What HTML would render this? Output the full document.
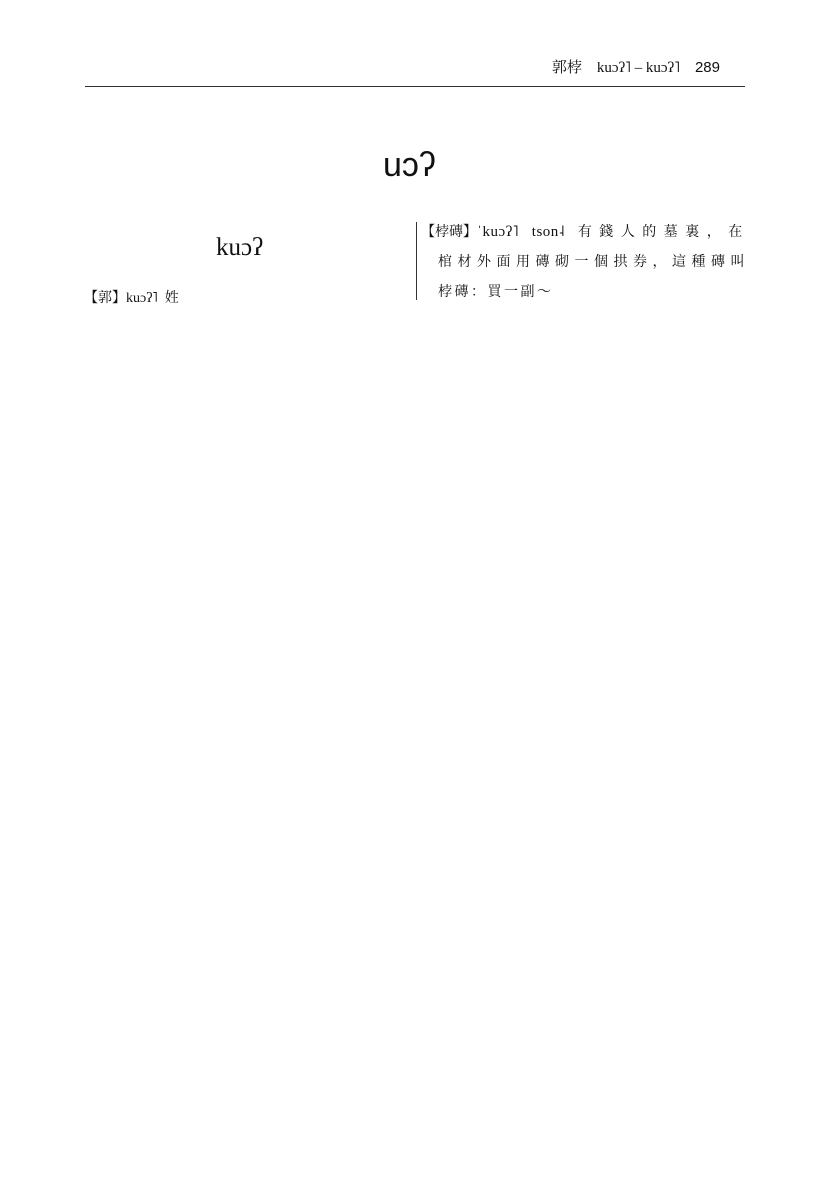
<!DOCTYPE html>
<html><head><meta charset="utf-8"><style>
body{margin:0;width:832px;height:1200px;background:#fff;position:relative;font-family:"Liberation Serif","Noto Serif CJK SC",serif;color:#111;overflow:hidden}
.a{position:absolute;white-space:nowrap}
.c{letter-spacing:5.5px}
</style></head><body>
<div class="a" style="right:112px;top:56px;font-size:15px;">郭桲&nbsp;&nbsp;&nbsp;&nbsp;kuɔʔ˥ – kuɔʔ˥&nbsp;&nbsp;&nbsp;&nbsp;<span style="font-family:'Liberation Sans',sans-serif">289</span></div>
<div class="a" style="left:85px;top:86px;width:660px;height:1px;background:#333"></div>
<div class="a" style="left:383px;top:146px;font-size:34px;font-family:'Liberation Sans',sans-serif;">uɔʔ</div>
<div class="a" style="left:216px;top:234px;font-size:25px;">kuɔʔ</div>
<div class="a" style="left:84px;top:287px;font-size:14px;">【郭】kuɔʔ˥&nbsp;&nbsp;姓</div>
<div class="a" style="left:416px;top:222px;width:1px;height:78px;background:#333"></div>
<div class="a" style="left:421px;top:221px;font-size:14px;">【桲磚】<span style="font-size:15px;letter-spacing:0.5px">ˈkuɔʔ˥&nbsp;&nbsp;&nbsp;tson˨&nbsp;&nbsp;&nbsp;</span><span style="letter-spacing:7.5px">有錢人的墓裏，在</span></div>
<div class="a" style="left:438px;top:251px;font-size:14px;"><span class="c">棺材外面用磚砌一個拱券，這種磚叫</span></div>
<div class="a" style="left:438px;top:281px;font-size:14px;"><span style="letter-spacing:2.5px">桲磚：買一副～</span></div>
</body></html>
